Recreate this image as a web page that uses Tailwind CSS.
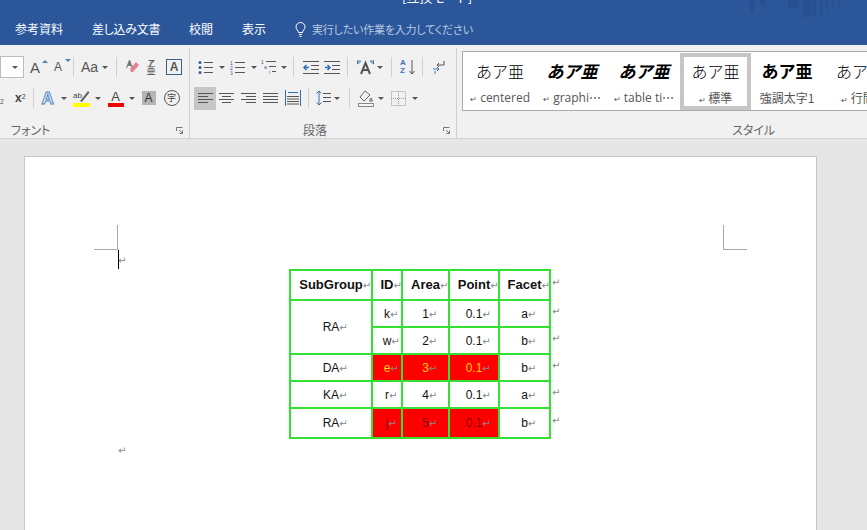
<!DOCTYPE html>
<html lang="ja">
  <head>
    <meta charset="UTF-8" />
    <title>Word</title>
    <script src="https://cdn.jsdelivr.net/npm/@tailwindcss/browser@4"></script>
  </head>
  <body class="w-[867px] h-[530px] overflow-hidden bg-[#e6e6e6] font-['Liberation_Sans','Noto_Sans_CJK_JP',sans-serif]">
    <!-- タイトルバー + タブ -->
    <header class="relative h-[45px] bg-[#2b579a] overflow-hidden text-white text-[12px] font-['Noto_Sans_CJK_JP',sans-serif] [font-feature-settings:'palt']">
      <div class="absolute left-[402px] top-[-13px] text-[13px]">[互換モード]</div>
      <!-- 右上の模様 -->
      <svg class="absolute left-[710px] top-0" width="157" height="20" fill="#26508f">
        <rect x="40" width="4" height="12" />
        <rect x="50" width="6" height="5" />
        <rect x="78" width="11" height="8" />
        <rect x="92" width="10" height="17" />
        <rect x="103" width="3" height="15" />
        <rect x="110" width="2" height="14" />
        <rect x="116" width="2" height="12" />
        <rect x="122" width="2" height="9" />
        <rect x="128" width="2" height="6" />
      </svg>
      <nav class="flex items-center h-full pt-[13px] pl-[15px]">
        <span class="w-[77px]">参考資料</span>
        <span class="w-[97px] tracking-[-0.3px]">差し込み文書</span>
        <span class="w-[53px]">校閲</span>
        <span class="w-[53px]">表示</span>
        <svg class="mr-[6px]" width="11" height="15" viewBox="0 0 11 15" fill="none" stroke="#fff" stroke-width="1">
          <path d="M3.5 10.5C3.5 8.5 1 7.5 1 5a4.5 4.5 0 0 1 9 0c0 2.500-2.500 3.500-2.500 5.500zM4 12.500h3M4.500 14.500h2" />
        </svg>
        <span class="text-[11px] tracking-[-0.2px] text-[#b9cae3]">実行したい作業を入力してください</span>
      </nav>
    </header>

    <!-- リボン -->
    <section class="flex h-[94px] bg-[#f1f1f1] border-b border-[#d2d2d2] text-[#444]">
      <!-- フォント -->
      <div class="relative w-[190px] shrink-0 border-r border-[#d0d0d0] mt-[3px] overflow-hidden">
        <div class="flex items-center h-[22px] mt-[8px]">
          <div class="flex items-center justify-end w-[24px] h-[22px] bg-white border border-[#bdbdbd] pr-[5px]"><i class="w-0 h-0 border-x-[3px] border-x-transparent border-t-[3px] border-t-[#555]"></i></div>
          <span class="relative w-[16px] ml-[6px] text-[15px] leading-none text-[#555]">A<i class="absolute right-[-2px] top-0 w-0 h-0 border-x-[3px] border-x-transparent border-b-[3px] border-b-[#4e7fb8]"></i></span>
          <span class="relative w-[14px] ml-[8px] text-[12px] leading-none text-[#555]">A<i class="absolute right-[-3px] top-[-2px] w-0 h-0 border-x-[3px] border-x-transparent border-t-[3px] border-t-[#4e7fb8]"></i></span>
          <i class="w-px h-[20px] bg-[#d0d0d0] ml-[5px]"></i>
          <span class="ml-[7px] text-[14px] leading-none text-[#555]">Aa</span>
          <i class="ml-[4px] w-0 h-0 border-x-[3px] border-x-transparent border-t-[3px] border-t-[#555]"></i>
          <i class="w-px h-[20px] bg-[#d0d0d0] ml-[8px]"></i>
          <svg class="ml-[8px]" width="15" height="16" viewBox="0 0 15 16">
            <path d="M5 10l6-7 3 3-6 7H6z" fill="#e8808f" />
            <path d="M4 1 1 9h1l1-2h3l1 2h1L5 1z" fill="#777" />
          </svg>
          <div class="ml-[6px] w-[10px] flex flex-col items-center leading-none text-[#444]">
            <span class="text-[7px] h-[7px] font-bold leading-[7px]">ア</span>
            <span class="text-[9px] h-[10px] leading-[10px]">亜</span>
          </div>
          <span class="ml-[10px] flex items-center justify-center w-[16px] h-[16px] border border-[#3b5f8a] text-[12px] font-bold text-[#555] leading-none">A</span>
        </div>
        <div class="flex items-center h-[22px] mt-[9px]">
          <span class="w-[14px] text-[7px] leading-none text-[#555] pt-[6px]">2</span>
          <span class="ml-[1px] text-[12px] font-bold leading-none text-[#444]">x<sup class="text-[7px] font-normal">2</sup></span>
          <i class="w-px h-[20px] bg-[#d0d0d0] ml-[7px]"></i>
          <span class="ml-[8px] w-[14px] text-[17px] leading-none text-[#fff] font-bold [-webkit-text-stroke:1px_#4e83c4]">A</span>
          <i class="ml-[5px] w-0 h-0 border-x-[3px] border-x-transparent border-t-[3px] border-t-[#555]"></i>
          <div class="ml-[6px] w-[17px] flex flex-col items-center">
            <svg width="17" height="14" viewBox="0 0 17 14">
              <text x="0" y="9" font-size="8" fill="#444">ab</text>
              <path d="M7 12 15 2l1.500 1.500L9 13z" fill="#666" />
            </svg>
            <i class="w-[17px] h-[4px] bg-[#ffff00]"></i>
          </div>
          <i class="ml-[5px] w-0 h-0 border-x-[3px] border-x-transparent border-t-[3px] border-t-[#555]"></i>
          <div class="ml-[7px] w-[16px] flex flex-col items-center">
            <span class="text-[13px] h-[13px] leading-[13px] text-[#444]">A</span>
            <i class="w-[16px] h-[4px] bg-[#f00000]"></i>
          </div>
          <i class="ml-[5px] w-0 h-0 border-x-[3px] border-x-transparent border-t-[3px] border-t-[#555]"></i>
          <span class="ml-[7px] flex items-center justify-center w-[14px] h-[14px] bg-[#b5b5b5] text-[12px] text-[#333] leading-none">A</span>
          <span class="ml-[8px] flex items-center justify-center w-[16px] h-[16px] rounded-full border border-[#555] text-[9px] text-[#444] leading-none">字</span>
        </div>
        <div class="flex items-center justify-between mt-[12px] pl-[11px] pr-[6px] h-[18px] text-[12px] text-[#666] font-['Noto_Sans_CJK_JP',sans-serif] [font-feature-settings:'palt']">
          <span>フォント</span>
          <svg width="7" height="7" viewBox="0 0 7 7" fill="none" stroke="#777"><path d="M.500 4V.500H6.500M3 3l3.500 3.500M6.500 3.500v3h-3" /></svg>
        </div>
      </div>

      <!-- 段落 -->
      <div class="relative w-[267px] shrink-0 border-r border-[#d0d0d0] mt-[3px] overflow-hidden">
        <div class="flex items-center h-[22px] mt-[8px] pl-[8px]">
          <svg width="15" height="15" viewBox="0 0 15 15" stroke="#555" fill="#3b5f8a">
            <circle cx="2" cy="2.500" r="1.500" stroke="none" /><circle cx="2" cy="7.500" r="1.500" stroke="none" /><circle cx="2" cy="12.500" r="1.500" stroke="none" />
            <path d="M6 2.500h9M6 7.500h9M6 12.500h9" />
          </svg>
          <i class="ml-[6px] w-0 h-0 border-x-[3px] border-x-transparent border-t-[3px] border-t-[#555]"></i>
          <svg class="ml-[5px]" width="15" height="15" viewBox="0 0 15 15" stroke="#555" fill="#3b5f8a">
            <text x="0" y="5" font-size="5" stroke="none">1</text><text x="0" y="10" font-size="5" stroke="none">2</text><text x="0" y="15" font-size="5" stroke="none">3</text>
            <path d="M5 2.500h10M5 7.500h10M5 12.500h10" />
          </svg>
          <i class="ml-[6px] w-0 h-0 border-x-[3px] border-x-transparent border-t-[3px] border-t-[#555]"></i>
          <svg class="ml-[4px]" width="16" height="16" viewBox="0 0 16 16" stroke="#555" fill="#3b5f8a">
            <text x="0" y="5" font-size="5" stroke="none">1</text><text x="3" y="10" font-size="5" stroke="none">a</text><text x="8" y="15" font-size="5" stroke="none">i</text>
            <path d="M5 2.500h10M8 7.500h7M11 12.500h4" />
          </svg>
          <i class="ml-[4px] w-0 h-0 border-x-[3px] border-x-transparent border-t-[3px] border-t-[#555]"></i>
          <i class="w-px h-[20px] bg-[#d0d0d0] ml-[6px]"></i>
          <svg class="ml-[9px]" width="16" height="13" viewBox="0 0 16 13" stroke="#555" fill="none">
            <path d="M0 .500h16M8 4.500h8M8 8.500h8M0 12.500h16" /><path d="M6 6.500H1M3.500 4 1 6.500 3.500 9" stroke="#2f6fb5" stroke-width="1.500" />
          </svg>
          <svg class="ml-[5px]" width="16" height="13" viewBox="0 0 16 13" stroke="#555" fill="none">
            <path d="M0 .500h16M8 4.500h8M8 8.500h8M0 12.500h16" /><path d="M1 6.500h5M3.500 4 6 6.500 3.500 9" stroke="#2f6fb5" stroke-width="1.500" />
          </svg>
          <i class="w-px h-[20px] bg-[#d0d0d0] ml-[7px]"></i>
          <svg class="ml-[8px]" width="19" height="16" viewBox="0 0 19 16" fill="none">
            <path d="M5 15 9.500 4 14 15M7 11h5" stroke="#555" stroke-width="2" />
            <path d="M1.500 5 5 2M1 2h3.500v0M1.500 1.500V5M17.500 5 14 2M18 2h-3.500M17.500 1.500V5" stroke="#3b78b8" />
          </svg>
          <i class="ml-[2px] w-0 h-0 border-x-[3px] border-x-transparent border-t-[3px] border-t-[#555]"></i>
          <i class="w-px h-[20px] bg-[#d0d0d0] ml-[8px]"></i>
          <div class="ml-[8px] w-[9px] flex flex-col text-[8px] leading-[8px] font-bold text-[#3b78b8]"><span>A</span><span>Z</span></div>
          <svg width="6" height="16" viewBox="0 0 6 16" fill="none" stroke="#555"><path d="M3 1v14M.500 12 3 15l2.500-3" /></svg>
          <i class="w-px h-[20px] bg-[#d0d0d0] ml-[7px]"></i>
          <svg class="ml-[9px]" width="13" height="14" viewBox="0 0 13 14" fill="none" stroke="#555"><path d="M12 1v4H5M7 3 5 5l2 2" /><path d="M1 9h6M5 7l2 2-2 2M3 11v3" stroke="#3b78b8" /></svg>
        </div>
        <div class="flex items-center h-[22px] mt-[9px] pl-[4px]">
          <div class="flex items-center justify-center w-[22px] h-[23px] bg-[#c6c6c6]"><svg width="15" height="11" viewBox="0 0 15 11" stroke="#555"><path d="M0 .500h15M0 3.500h10M0 6.500h15M0 9.500h10" /></svg></div>
          <svg class="ml-[3px]" width="15" height="11" viewBox="0 0 15 11" stroke="#555"><path d="M0 .500h15M3 3.500h9M0 6.500h15M3 9.500h9" /></svg>
          <svg class="ml-[7px]" width="15" height="11" viewBox="0 0 15 11" stroke="#555"><path d="M0 .500h15M5 3.500h10M0 6.500h15M5 9.500h10" /></svg>
          <svg class="ml-[7px]" width="15" height="11" viewBox="0 0 15 11" stroke="#555"><path d="M0 .500h15M0 3.500h15M0 6.500h15M0 9.500h15" /></svg>
          <svg class="ml-[7px]" width="16" height="16" viewBox="0 0 16 16" stroke="#555" fill="none"><path d="M.500 0v16M15.500 0v16M3 2.500h10" stroke="#2f6fb5" /><path d="M2 6.500h12M2 9h12M2 11.500h12M2 14h12" /></svg>
          <i class="w-px h-[20px] bg-[#d0d0d0] ml-[7px]"></i>
          <svg class="ml-[7px]" width="15" height="16" viewBox="0 0 15 16" fill="none" stroke="#555"><path d="M3 1v14M.500 3.500 3 1l2.500 2.500M.500 12.500 3 15l2.500-2.500" stroke="#2f6fb5" /><path d="M7 3.500h8M7 7.500h8M7 11.500h8" /></svg>
          <i class="ml-[3px] w-0 h-0 border-x-[3px] border-x-transparent border-t-[3px] border-t-[#555]"></i>
          <i class="w-px h-[20px] bg-[#d0d0d0] ml-[9px]"></i>
          <svg class="ml-[8px]" width="16" height="17" viewBox="0 0 16 17" fill="none" stroke="#666"><path d="M7 1 2 7l4 4 6-6zM13 8l1.500 3-3 0z" /><rect x=".500" y="13.500" width="15" height="3" stroke="#888" fill="#f6f6f6" /></svg>
          <i class="ml-[4px] w-0 h-0 border-x-[3px] border-x-transparent border-t-[3px] border-t-[#555]"></i>
          <svg class="ml-[7px]" width="15" height="15" viewBox="0 0 15 15" fill="none" stroke="#999" stroke-dasharray="1 1"><path d="M.500 .500h14v14H.500zM7.500 0v15M0 7.500h15" /></svg>
          <i class="ml-[6px] w-0 h-0 border-x-[3px] border-x-transparent border-t-[3px] border-t-[#555]"></i>
        </div>
        <div class="relative mt-[12px] h-[18px] text-center text-[12px] text-[#666] font-['Noto_Sans_CJK_JP',sans-serif]">
          <span class="pr-[16px]">段落</span>
          <svg class="absolute right-[6px] top-[6px]" width="7" height="7" viewBox="0 0 7 7" fill="none" stroke="#777"><path d="M.500 4V.500H6.500M3 3l3.500 3.500M6.500 3.500v3h-3" /></svg>
        </div>
      </div>

      <!-- スタイル -->
      <div class="flex-1 min-w-0 pl-[5px] mt-[6px]">
        <div class="flex h-[60px] bg-white border border-[#ababab] border-r-0 pl-px overflow-hidden font-['Noto_Sans_CJK_JP',sans-serif] text-[#555]">
          <div class="w-[72px] shrink-0 text-center pt-[7px]">
            <div class="text-[16px] leading-[24px] font-light text-black">あア亜</div>
            <div class="mt-[6px] text-[12px] leading-[18px] font-['Open_Sans',sans-serif]"><span class="text-[8px]">↵</span> centered</div>
          </div>
          <div class="w-[72px] shrink-0 text-center pt-[7px]">
            <div class="text-[17px] leading-[24px] font-bold italic text-black">あア亜</div>
            <div class="mt-[6px] text-[12px] leading-[18px] font-['Open_Sans',sans-serif]"><span class="text-[8px]">↵</span> graphi⋯</div>
          </div>
          <div class="w-[72px] shrink-0 text-center pt-[7px]">
            <div class="text-[17px] leading-[24px] font-bold italic text-black">あア亜</div>
            <div class="mt-[6px] text-[12px] leading-[18px] font-['Open_Sans',sans-serif]"><span class="text-[8px]">↵</span> table ti⋯</div>
          </div>
          <div class="w-[71px] shrink-0 h-[57px] mt-px border-4 border-[#c6c6c6] text-center pt-[2px]">
            <div class="text-[16px] leading-[24px] font-light text-black">あア亜</div>
            <div class="mt-[6px] text-[12px] leading-[18px]"><span class="text-[8px]">↵</span> 標準</div>
          </div>
          <div class="w-[72px] shrink-0 text-center pt-[7px]">
            <div class="text-[17px] leading-[24px] font-bold text-black">あア亜</div>
            <div class="mt-[6px] text-[12px] leading-[18px]">強調太字1</div>
          </div>
          <div class="w-[72px] shrink-0 pt-[7px] pl-[13px] whitespace-nowrap">
            <div class="text-[16px] leading-[24px] font-light text-black">あア亜</div>
            <div class="mt-[6px] text-[12px] leading-[18px] pl-[5px]"><span class="text-[8px]">↵</span> 行間詰め</div>
          </div>
        </div>
        <div class="mt-[10px] ml-[270px] w-[36px] h-[18px] whitespace-nowrap text-[12px] text-[#666] font-['Noto_Sans_CJK_JP',sans-serif] [font-feature-settings:'palt']">スタイル</div>
      </div>
    </section>

    <!-- 文書エリア -->
    <main class="pt-[17px] pl-[24px]">
      <div class="relative w-[793px] h-[380px] bg-white border border-[#c6c6c6] pt-[95px] pl-[93px]">
        <!-- トンボ -->
        <i class="absolute left-[92px] top-[68px] w-px h-[25px] bg-[#a8a8a8]"></i>
        <i class="absolute left-[69px] top-[92px] w-[23px] h-px bg-[#a8a8a8]"></i>
        <i class="absolute left-[698px] top-[68px] w-px h-[25px] bg-[#a8a8a8]"></i>
        <i class="absolute left-[698px] top-[92px] w-[24px] h-px bg-[#a8a8a8]"></i>
        <!-- カーソル -->
        <i class="absolute left-[93px] top-[93px] w-px h-[19px] bg-black"></i>

        <p class="h-[17px] text-[10px] leading-[17px] text-[#888] font-['DejaVu_Sans',sans-serif]">↵</p>
        <!-- 段落記号はセンタリングに含めない(Wordと同じ) -->
        <table class="ml-[171px] border-collapse text-[12px] text-center text-[#111] [&_span]:inline-block [&_span]:w-0 [&_span]:text-[10px] [&_span]:leading-none [&_span]:font-normal [&_span]:text-[#888] [&_span]:font-['DejaVu_Sans']">
          <tbody>
            <tr class="h-[30px] text-[13px] font-bold">
              <td class="w-[82px] p-0 border-2 border-[#35e035]">SubGroup<span>↵</span></td>
              <td class="w-[30px] p-0 border-2 border-[#35e035]">ID<span>↵</span></td>
              <td class="w-[47px] p-0 border-2 border-[#35e035]">Area<span>↵</span></td>
              <td class="w-[50px] p-0 border-2 border-[#35e035]">Point<span>↵</span></td>
              <td class="w-[51px] p-0 border-2 border-[#35e035]">Facet<span>↵</span></td>
              <td class="w-[10px] pl-px pb-[6px] text-left"><span>↵</span></td>
            </tr>
            <tr class="h-[27px]">
              <td rowspan="2" class="p-0 border-2 border-[#35e035]">RA<span>↵</span></td>
              <td class="p-0 border-2 border-[#35e035]">k<span>↵</span></td>
              <td class="p-0 border-2 border-[#35e035]">1<span>↵</span></td>
              <td class="p-0 border-2 border-[#35e035]">0.1<span>↵</span></td>
              <td class="p-0 border-2 border-[#35e035]">a<span>↵</span></td>
              <td class="pl-px pb-[6px] text-left"><span>↵</span></td>
            </tr>
            <tr class="h-[27px]">
              <td class="p-0 border-2 border-[#35e035]">w<span>↵</span></td>
              <td class="p-0 border-2 border-[#35e035]">2<span>↵</span></td>
              <td class="p-0 border-2 border-[#35e035]">0.1<span>↵</span></td>
              <td class="p-0 border-2 border-[#35e035]">b<span>↵</span></td>
              <td class="pl-px pb-[6px] text-left"><span>↵</span></td>
            </tr>
            <tr class="h-[27px]">
              <td class="p-0 border-2 border-[#35e035]">DA<span>↵</span></td>
              <td class="p-0 border-2 border-[#35e035] bg-[#ff0000] text-[#ffd500]">e<span>↵</span></td>
              <td class="p-0 border-2 border-[#35e035] bg-[#ff0000] text-[#ffd500]">3<span>↵</span></td>
              <td class="p-0 border-2 border-[#35e035] bg-[#ff0000] text-[#ffd500]">0.1<span>↵</span></td>
              <td class="p-0 border-2 border-[#35e035]">b<span>↵</span></td>
              <td class="pl-px pb-[6px] text-left"><span>↵</span></td>
            </tr>
            <tr class="h-[27px]">
              <td class="p-0 border-2 border-[#35e035]">KA<span>↵</span></td>
              <td class="p-0 border-2 border-[#35e035]">r<span>↵</span></td>
              <td class="p-0 border-2 border-[#35e035]">4<span>↵</span></td>
              <td class="p-0 border-2 border-[#35e035]">0.1<span>↵</span></td>
              <td class="p-0 border-2 border-[#35e035]">a<span>↵</span></td>
              <td class="pl-px pb-[6px] text-left"><span>↵</span></td>
            </tr>
            <tr class="h-[30px]">
              <td class="p-0 border-2 border-[#35e035]">RA<span>↵</span></td>
              <td class="p-0 border-2 border-[#35e035] bg-[#ff0000] text-[#7a0000]">j<span>↵</span></td>
              <td class="p-0 border-2 border-[#35e035] bg-[#ff0000] text-[#7a0000]">5<span>↵</span></td>
              <td class="p-0 border-2 border-[#35e035] bg-[#ff0000] text-[#7a0000]">0.1<span>↵</span></td>
              <td class="p-0 border-2 border-[#35e035]">b<span>↵</span></td>
              <td class="pl-px pb-[6px] text-left"><span>↵</span></td>
            </tr>
          </tbody>
        </table>
        <p class="mt-[3px] h-[17px] text-[10px] leading-[17px] text-[#888] font-['DejaVu_Sans',sans-serif]">↵</p>
      </div>
    </main>
  </body>
</html>
